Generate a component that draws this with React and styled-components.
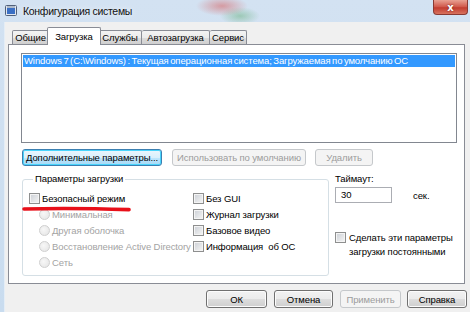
import React from "react";
import styled, { createGlobalStyle } from "styled-components";

const GlobalStyle = createGlobalStyle`
  html, body {
    margin: 0;
    padding: 0;
    background: #f0f0f0;
  }
  body {
    font-family: "Liberation Sans", Arial, sans-serif;
    font-size: 9.5px;
    letter-spacing: -0.1px;
    color: #000;
  }
`;

const Window = styled.div`
  width: 470px;
  height: 312px;
  display: flex;
  flex-direction: column;
  overflow: hidden;
  background:
    radial-gradient(ellipse 26px 10px at 222px 6px, rgba(214, 96, 96, 0.55), transparent),
    radial-gradient(ellipse 20px 9px at 240px 16px, rgba(90, 170, 110, 0.45), transparent),
    linear-gradient(180deg, #d3e2f2 0%, #c9dcef 100%);
`;

const TitleBar = styled.div`
  height: 22px;
  display: flex;
  align-items: flex-start;
  padding-left: 5px;
  flex-shrink: 0;
`;

const TitleIcon = styled.svg`
  width: 12px;
  height: 11px;
  margin-top: 5px;
`;

const Title = styled.span`
  margin-left: 6px;
  margin-top: 4px;
  font-size: 10.5px;
  letter-spacing: -0.3px;
  line-height: 14px;
  color: #111;
  text-shadow: 0 0 6px rgba(255, 255, 255, 0.9);
`;

const CloseButton = styled.div`
  margin-left: auto;
  margin-right: 2px;
  width: 33px;
  height: 14px;
  display: flex;
  align-items: center;
  justify-content: center;
  border: 1px solid #8a3a33;
  border-top: none;
  border-radius: 0 0 4px 4px;
  background: linear-gradient(180deg, #e8a192 0%, #d0574a 50%, #c23c2f 55%, #d8735f 100%);
  color: #fff;
  font-family: "DejaVu Sans", sans-serif;
  font-weight: bold;
  font-size: 10px;
  text-shadow: 0 0 2px #6b1b14;
`;

const Client = styled.div`
  flex: 1;
  margin-left: 4px;
  border-left: 1px solid #e4edf6;
  background: #f0f0f0;
  padding: 5px 5px 0 3px;
  display: flex;
  flex-direction: column;
`;

const TabStrip = styled.div`
  height: 17px;
  display: flex;
  align-items: flex-end;
  padding-left: 4px;
`;

const Tab = styled.div`
  position: relative;
  box-sizing: border-box;
  width: ${(p) => p.$w}px;
  height: ${(p) => (p.$active ? "18px" : "14px")};
  margin: 0 ${(p) => (p.$active ? "-2px" : "0")} ${(p) => (p.$active ? "-1px" : "0")};
  z-index: ${(p) => (p.$active ? 2 : 1)};
  display: flex;
  align-items: center;
  justify-content: center;
  border: 1px solid #898c95;
  border-bottom: none;
  border-left-width: ${(p) => (p.$first || p.$active ? "1px" : "0")};
  border-radius: 2px 2px 0 0;
  background: ${(p) =>
    p.$active ? "#fff" : "linear-gradient(180deg, #f3f3f3 0%, #ebebeb 50%, #dddddd 51%, #cfcfcf 100%)"};
  line-height: 12px;
  padding-top: ${(p) => (p.$active ? "0" : "1px")};
  white-space: nowrap;
`;

const TabPanel = styled.div`
  height: 240px;
  box-sizing: border-box;
  border: 1px solid #898c95;
  background: #fff;
  padding: 8px 7px 0 12px;
  display: flex;
  flex-direction: column;
`;

const ListBox = styled.div`
  height: 90px;
  box-sizing: border-box;
  border: 1px solid #828790;
  padding: 1px;
  background: #fff;
`;

const ListRow = styled.div`
  height: 12px;
  line-height: 12px;
  padding-left: 1px;
  word-spacing: -1px;
  background: ${(p) => (p.$selected ? "#3399ff" : "transparent")};
  color: ${(p) => (p.$selected ? "#fff" : "#000")};
  white-space: nowrap;
`;

const ButtonRow = styled.div`
  display: flex;
  margin: 6px 0 0 1px;
`;

const Button = styled.div`
  box-sizing: border-box;
  width: ${(p) => p.$w}px;
  height: ${(p) => p.$h || 17}px;
  margin-left: ${(p) => p.$gap || 0}px;
  display: flex;
  align-items: center;
  justify-content: center;
  border-radius: 3px;
  white-space: nowrap;
  border: 1px solid ${(p) => (p.$disabled ? "#c5c8cb" : p.$focus ? "#3c7fb1" : "#707070")};
  color: ${(p) => (p.$disabled ? "#9c9c9c" : "#000")};
  background: ${(p) =>
    p.$disabled
      ? "#f4f4f4"
      : p.$focus
      ? "linear-gradient(180deg, #eaf6fd 0%, #d9f0fc 50%, #bee6fd 51%, #a7d9f5 100%)"
      : "linear-gradient(180deg, #f2f2f2 0%, #ebebeb 50%, #dddddd 51%, #cfcfcf 100%)"};
  box-shadow: ${(p) =>
    p.$focus ? "inset 0 0 0 1px #48d4fb" : p.$disabled ? "none" : "inset 0 0 0 1px #fcfcfc"};
`;

const Lower = styled.div`
  display: flex;
  margin-top: 7px;
  margin-left: 1px;
`;

const GroupBox = styled.fieldset`
  position: relative;
  width: 307px;
  height: 103px;
  box-sizing: border-box;
  margin: 0;
  padding: 5px 0 0 6px;
  border: 1px solid #d5dfe5;
  border-radius: 3px;
`;

const Legend = styled.legend`
  margin-left: 4px;
  padding: 0 2px;
  line-height: 12px;
`;

const OptionsGrid = styled.div`
  display: grid;
  grid-template-columns: 164px 1fr;
  grid-auto-flow: column;
  grid-template-rows: repeat(5, 16px);
`;

const Option = styled.div`
  display: flex;
  align-items: center;
  gap: 2px;
  padding-left: ${(p) => (p.$indent ? "10px" : "0")};
  color: ${(p) => (p.$disabled ? "#a3a3a3" : "#000")};
  white-space: pre;
`;

const CheckBox = styled.span`
  width: 11px;
  height: 11px;
  box-sizing: border-box;
  flex-shrink: 0;
  border: 1px solid #8e8f8f;
  background: linear-gradient(135deg, #cbcfd5 0%, #f6f6f6 100%);
  box-shadow: inset 0 0 0 1px #f4f4f4;
`;

const Radio = styled.span`
  width: 11px;
  height: 11px;
  box-sizing: border-box;
  flex-shrink: 0;
  border-radius: 50%;
  border: 1px solid #cfcfcf;
  background: radial-gradient(circle at 40% 40%, #f7f7f7 0%, #e3e3e3 100%);
`;

const RedMark = styled.svg`
  position: absolute;
  left: -1px;
  top: 20px;
  width: 110px;
  height: 8px;
  pointer-events: none;
`;

const SideColumn = styled.div`
  flex: 1;
  margin-left: 6px;
  display: flex;
  flex-direction: column;
`;

const FieldLabel = styled.div`
  line-height: 12px;
`;

const TimeoutRow = styled.div`
  display: flex;
  align-items: center;
  margin-top: 2px;
`;

const Input = styled.div`
  box-sizing: border-box;
  width: 57px;
  height: 16px;
  border: 1px solid #abadb3;
  padding-left: 5px;
  line-height: 14px;
  background: #fff;
`;

const Unit = styled.span`
  margin-left: 21px;
`;

const PersistOption = styled.div`
  display: flex;
  align-items: flex-start;
  gap: 3px;
  margin-top: 28px;
  line-height: 14px;
  white-space: nowrap;
  span:first-child {
    margin-top: 1px;
  }
`;

const Footer = styled.div`
  display: flex;
  justify-content: flex-end;
  margin: 6px -2px 0 0;
`;

function App() {
  return (
    <Window>
      <GlobalStyle />
      <TitleBar>
        <TitleIcon viewBox="0 0 12 11">
          <rect x="0.5" y="0.5" width="11" height="10" rx="1" fill="#dfe6ef" stroke="#50607a" />
          <rect x="2" y="3" width="8" height="6" fill="#3a6fc4" />
          <rect x="2" y="1.5" width="8" height="1" fill="#7c8ea8" />
        </TitleIcon>
        <Title>Конфигурация системы</Title>
        <CloseButton>x</CloseButton>
      </TitleBar>
      <Client>
        <TabStrip>
          <Tab $first $w={37}>Общие</Tab>
          <Tab $active $w={54}>Загрузка</Tab>
          <Tab $w={43}>Службы</Tab>
          <Tab $w={68}>Автозагрузка</Tab>
          <Tab $w={37}>Сервис</Tab>
        </TabStrip>
        <TabPanel>
          <ListBox>
            <ListRow $selected>
              Windows 7 (C:\Windows) : Текущая операционная система; Загружаемая по умолчанию ОС
            </ListRow>
          </ListBox>
          <ButtonRow>
            <Button $w={140} $focus>Дополнительные параметры...</Button>
            <Button $w={134} $gap={10} $disabled>Использовать по умолчанию</Button>
            <Button $w={58} $gap={9} $disabled>Удалить</Button>
          </ButtonRow>
          <Lower>
            <GroupBox>
              <Legend>Параметры загрузки</Legend>
              <OptionsGrid>
                <Option><CheckBox />Безопасный режим</Option>
                <Option $indent $disabled><Radio />Минимальная</Option>
                <Option $indent $disabled><Radio />Другая оболочка</Option>
                <Option $indent $disabled><Radio />Восстановление Active Directory</Option>
                <Option $indent $disabled><Radio />Сеть</Option>
                <Option><CheckBox />Без GUI</Option>
                <Option><CheckBox />Журнал загрузки</Option>
                <Option><CheckBox />Базовое видео</Option>
                <Option><CheckBox />Информация  об ОС</Option>
              </OptionsGrid>
              <RedMark viewBox="0 0 110 8">
                <path
                  d="M2 4 C 30 3.2, 70 3.4, 107 4.6"
                  stroke="#e8101a"
                  strokeWidth="3.6"
                  strokeLinecap="round"
                  fill="none"
                />
              </RedMark>
            </GroupBox>
            <SideColumn>
              <FieldLabel>Таймаут:</FieldLabel>
              <TimeoutRow>
                <Input>30</Input>
                <Unit>сек.</Unit>
              </TimeoutRow>
              <PersistOption>
                <CheckBox />
                <span>
                  Сделать эти параметры
                  <br />
                  загрузки постоянными
                </span>
              </PersistOption>
            </SideColumn>
          </Lower>
        </TabPanel>
        <Footer>
          <Button $w={61} $h={18}>ОК</Button>
          <Button $w={59} $h={18} $gap={7}>Отмена</Button>
          <Button $w={61} $h={18} $gap={7} $disabled>Применить</Button>
          <Button $w={60} $h={18} $gap={6}>Справка</Button>
        </Footer>
      </Client>
    </Window>
  );
}

export default App;
